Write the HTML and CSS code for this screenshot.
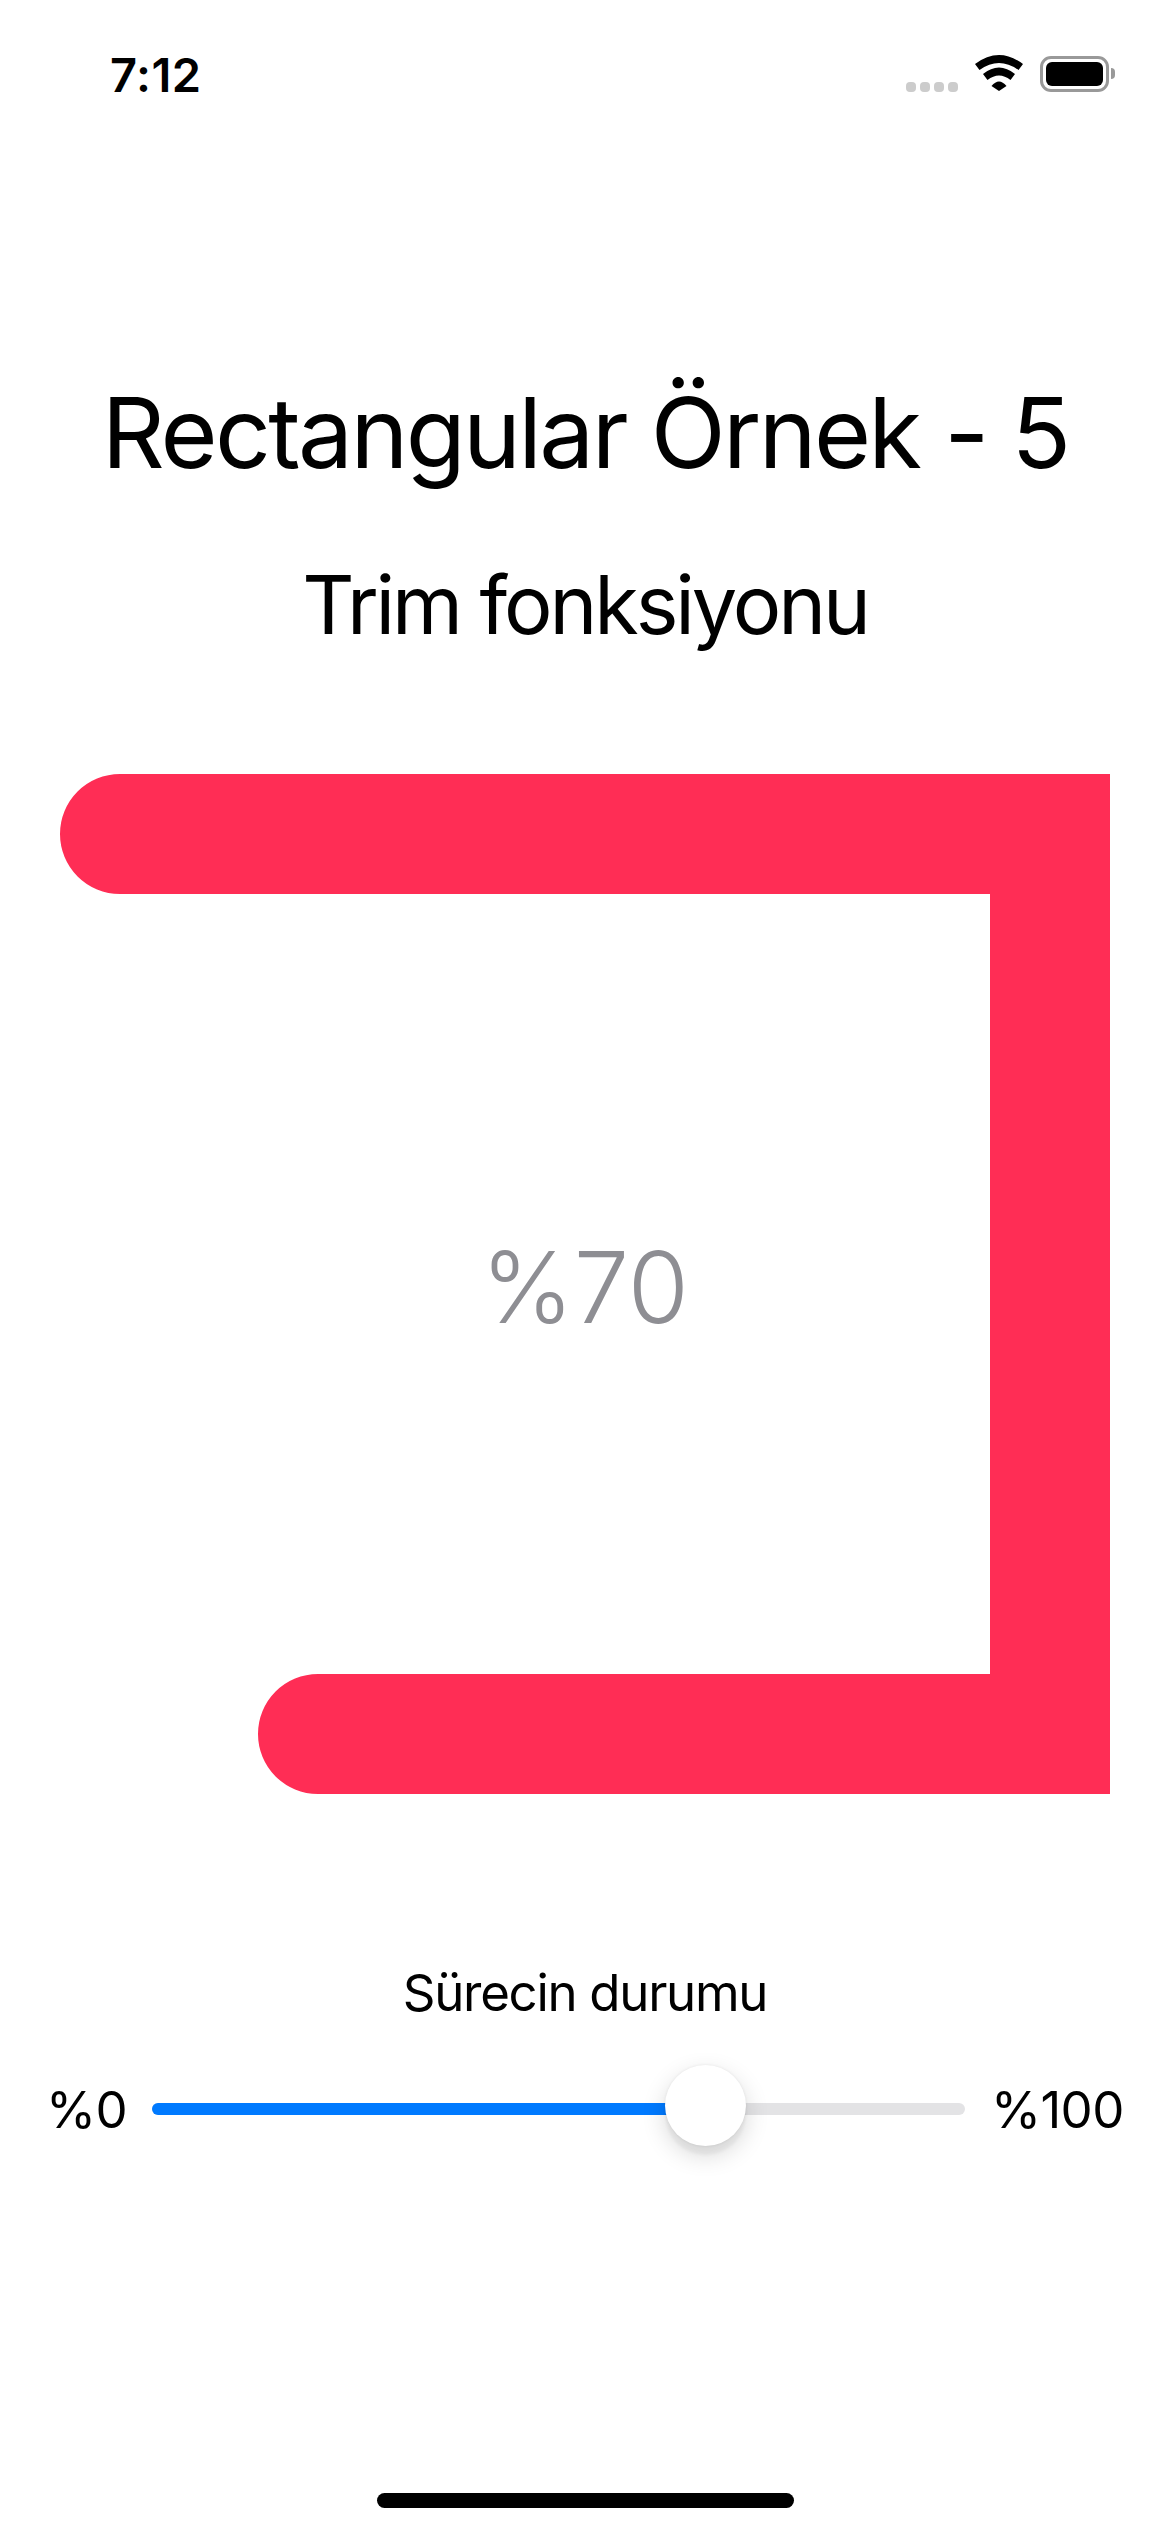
FILE: index.html
```html
<!DOCTYPE html>
<html lang="tr">
<head>
<meta charset="utf-8">
<title>Rectangular Örnek - 5</title>
<link rel="stylesheet" href="styles.css">
</head>
<body>
<main class="screen">
  <header class="status">
    <span class="time">7:12</span>
    <div class="status-icons">
      <div class="signal"><i></i><i></i><i></i><i></i></div>
      <svg class="wifi" width="48" height="36" viewBox="0 0 48 36">
        <path d="M0 9Q24-9 48 9L43.5 15Q24 1 4.5 15Z"/>
        <path d="M8 19Q24 6 40 19L35.5 25Q24 16 12.5 25Z"/>
        <path d="M16.5 31Q24 22 31.5 31L24 36Z"/>
      </svg>
      <div class="battery"><div class="battery-level"></div></div>
      <div class="battery-cap"></div>
    </div>
  </header>
  <h1 class="title">Rectangular Örnek - 5</h1>
  <h2 class="subtitle">Trim fonksiyonu</h2>
  <section class="shape">
    <svg width="1050" height="1020" viewBox="0 0 1050 1020">
      <path class="trim" d="M60 60H990V960H258"/>
    </svg>
    <span class="percent">%70</span>
  </section>
  <p class="slider-label">Sürecin durumu</p>
  <div class="slider-row">
    <span class="slider-min">%0</span>
    <div class="track">
      <div class="fill" style="width:68%"></div>
      <div class="thumb"></div>
    </div>
    <span class="slider-max">%100</span>
  </div>
  <div class="home"></div>
</main>
</body>
</html>
```

FILE: styles.css
```css
* { box-sizing: border-box; }
html, body { margin: 0; padding: 0; background: #fff; }
.screen {
  width: 1170px;
  height: 2532px;
  display: flex;
  flex-direction: column;
  overflow: hidden;
  background: #fff;
  color: #000;
  font-family: Inter, "Liberation Sans", sans-serif;
}
.status {
  height: 130px;
  display: flex;
  justify-content: space-between;
  align-items: flex-start;
  padding: 50px 55px 0 110px;
}
.time {
  font-size: 47px;
  line-height: 50px;
  font-weight: 600;
  letter-spacing: .5px;
}
.status-icons {
  display: flex;
  align-items: flex-start;
  padding-top: 5px;
}
.signal {
  display: flex;
  gap: 4px;
  margin: 27px 17px 0 0;
}
.signal i {
  width: 10px;
  height: 10px;
  border-radius: 4px;
  background: #ccc;
}
.wifi { display: block; margin-right: 17px; fill: #000; }
.battery {
  width: 69px;
  height: 36px;
  padding: 3px;
  margin-top: 1px;
  border: 3px solid #999;
  border-radius: 11px;
}
.battery-level { height: 100%; background: #000; border-radius: 6px; }
.battery-cap {
  width: 4px;
  height: 11px;
  margin: 13px 0 0 2px;
  background: #999;
  border-radius: 0 5px 5px 0;
}
.title {
  margin: 243px 0 0;
  text-align: center;
  font-size: 98px;
  line-height: 120px;
  font-weight: 400;
  letter-spacing: -2.7px;
}
.subtitle {
  margin: 62px 0 0;
  text-align: center;
  font-size: 81px;
  line-height: 100px;
  font-weight: 400;
  letter-spacing: -3.1px;
}
.shape {
  position: relative;
  width: 1050px;
  height: 1020px;
  margin: 119px 0 0 60px;
}
.shape svg { display: block; }
.trim {
  fill: none;
  stroke: #ff2d55;
  stroke-width: 120;
  stroke-linecap: round;
  stroke-linejoin: miter;
}
.percent {
  position: absolute;
  left: 0;
  top: 453px;
  width: 1050px;
  text-align: center;
  font-size: 99px;
  line-height: 120px;
  color: #8e8e93;
  font-weight: 350;
}
.slider-label {
  margin: 164px 0 0;
  text-align: center;
  font-size: 51px;
  line-height: 70px;
  letter-spacing: -1.3px;
}
.slider-row {
  display: flex;
  align-items: center;
  height: 60px;
  margin-top: 51px;
  padding-left: 46px;
  font-size: 51px;
  letter-spacing: -.6px;
}
.slider-min { width: 106px; }
.slider-max { margin-left: 26px; }
.track {
  position: relative;
  width: 813px;
  height: 12px;
  background: #e3e3e5;
  border-radius: 6px;
}
.fill { height: 100%; background: #007aff; border-radius: 6px 0 0 6px; }
.thumb {
  position: absolute;
  left: 513px;
  top: -38px;
  width: 81px;
  height: 81px;
  border-radius: 50%;
  background: #fff;
  box-shadow: 0 9px 24px rgba(0, 0, 0, .16), 0 9px 3px rgba(0, 0, 0, .04), 0 0 3px rgba(0, 0, 0, .08);
}
.home {
  width: 417px;
  height: 15px;
  margin: auto 0 24px 377px;
  background: #000;
  border-radius: 8px;
}
```
